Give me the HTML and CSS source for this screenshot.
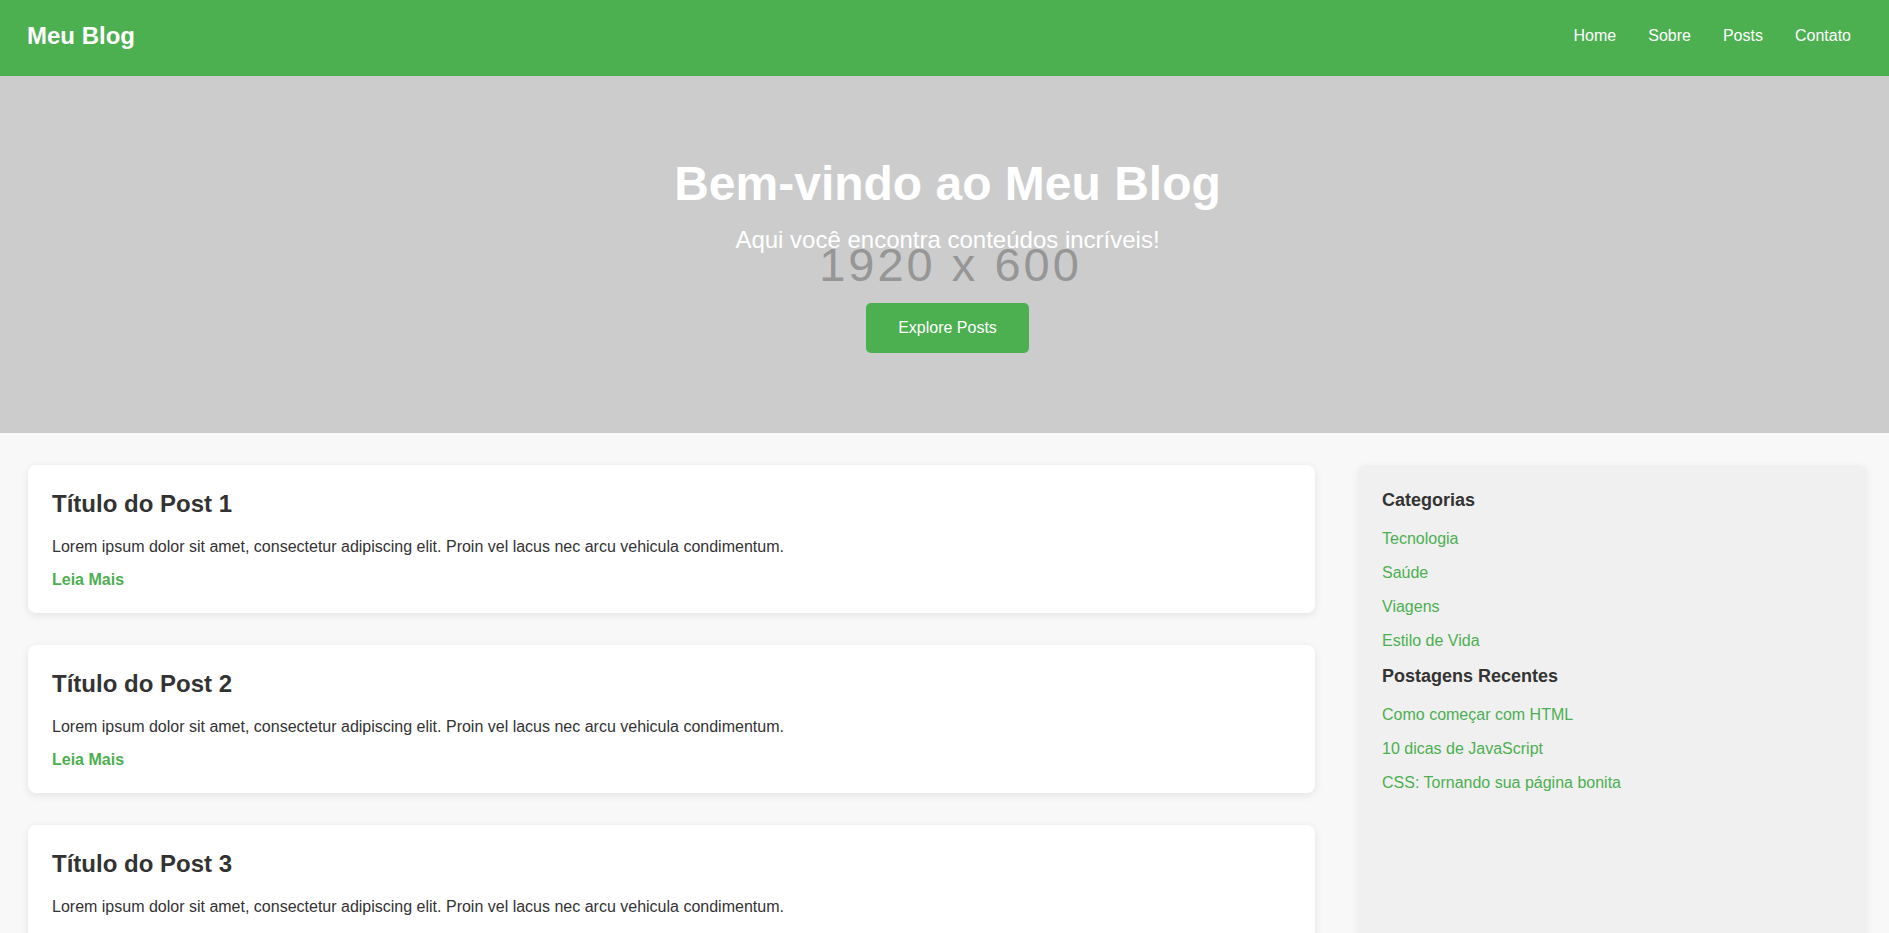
FILE: index.html
```
<!DOCTYPE html>
<html lang="pt-BR">
<head>
<meta charset="utf-8">
<title>Meu Blog</title>
<link rel="stylesheet" href="styles.css">
</head>
<body>
<header class="site-header">
  <div class="logo">Meu Blog</div>
  <nav class="nav">
    <a href="#">Home</a>
    <a href="#">Sobre</a>
    <a href="#">Posts</a>
    <a href="#">Contato</a>
  </nav>
</header>
<section class="hero">
  <span class="hero-placeholder">1920 x 600</span>
  <div class="hero-content">
    <h1 class="hero-title">Bem-vindo ao Meu Blog</h1>
    <p class="hero-sub">Aqui você encontra conteúdos incríveis!</p>
    <a class="btn" href="#">Explore Posts</a>
  </div>
</section>
<main class="main">
  <div class="posts">
    <article class="card">
      <h2 class="card-title">Título do Post 1</h2>
      <p class="card-text">Lorem ipsum dolor sit amet, consectetur adipiscing elit. Proin vel lacus nec arcu vehicula condimentum.</p>
      <a class="read-more" href="#">Leia Mais</a>
    </article>
    <article class="card">
      <h2 class="card-title">Título do Post 2</h2>
      <p class="card-text">Lorem ipsum dolor sit amet, consectetur adipiscing elit. Proin vel lacus nec arcu vehicula condimentum.</p>
      <a class="read-more" href="#">Leia Mais</a>
    </article>
    <article class="card">
      <h2 class="card-title">Título do Post 3</h2>
      <p class="card-text">Lorem ipsum dolor sit amet, consectetur adipiscing elit. Proin vel lacus nec arcu vehicula condimentum.</p>
      <a class="read-more" href="#">Leia Mais</a>
    </article>
  </div>
  <aside class="sidebar">
    <h3 class="side-title">Categorias</h3>
    <ul class="side-list">
      <li><a href="#">Tecnologia</a></li>
      <li><a href="#">Saúde</a></li>
      <li><a href="#">Viagens</a></li>
      <li><a href="#">Estilo de Vida</a></li>
    </ul>
    <h3 class="side-title">Postagens Recentes</h3>
    <ul class="side-list">
      <li><a href="#">Como começar com HTML</a></li>
      <li><a href="#">10 dicas de JavaScript</a></li>
      <li><a href="#">CSS: Tornando sua página bonita</a></li>
    </ul>
  </aside>
</main>
</body>
</html>
```
FILE: styles.css
```
* { box-sizing: border-box; }
body {
  margin: 0;
  font-family: "Liberation Sans", Arial, sans-serif;
  background: #f8f8f8;
  color: #333;
}
a { text-decoration: none; }

.site-header {
  height: 76px;
  background: #4caf50;
  display: flex;
  align-items: center;
  justify-content: space-between;
  padding: 0 38px 5px 27px;
}
.logo {
  color: #fff;
  font-size: 24px;
  font-weight: bold;
}
.nav {
  display: flex;
  gap: 32px;
}
.nav a {
  color: #fff;
  font-size: 16px;
}

.hero {
  position: relative;
  height: 357px;
  background: #cccccc;
  display: flex;
  align-items: center;
  justify-content: center;
  padding-left: 6px;
  overflow: hidden;
}
.hero-placeholder {
  position: absolute;
  top: 165px;
  left: 12px;
  right: 0;
  text-align: center;
  font-size: 47px;
  line-height: 47px;
  letter-spacing: 3px;
  color: #969696;
}
.hero-content {
  position: relative;
  display: flex;
  flex-direction: column;
  align-items: center;
  color: #fff;
}
.hero-title {
  margin: 0 0 15px;
  font-size: 48px;
  font-weight: bold;
}
.hero-sub {
  margin: 0 0 49px;
  font-size: 24px;
}
.btn {
  display: inline-block;
  background: #4caf50;
  color: #fff;
  font-size: 16px;
  padding: 16px 32px;
  border-radius: 5px;
}

.main {
  display: grid;
  grid-template-columns: 1287px 509px;
  gap: 43px;
  padding: 32px 22px 0 28px;
}
.posts {
  display: flex;
  flex-direction: column;
  gap: 32px;
}
.card {
  background: #fff;
  border-radius: 8px;
  padding: 25px 24px 24px;
  box-shadow: 0 2px 8px rgba(0, 0, 0, 0.09);
}
.card-title {
  margin: 0 0 20px;
  font-size: 24px;
  color: #333;
}
.card-text {
  margin: 0 0 15px;
  font-size: 16px;
  color: #333;
}
.read-more {
  display: block;
  color: #4caf50;
  font-weight: bold;
  font-size: 16px;
}

.sidebar {
  background: #f0f0f0;
  border-radius: 8px;
  padding: 25px 24px 24px;
  box-shadow: 0 2px 8px rgba(0, 0, 0, 0.06);
}
.side-title {
  margin: 0 0 19px;
  font-size: 18px;
  color: #333;
}
.side-list {
  list-style: none;
  margin: 0;
  padding: 0;
}
.side-list li {
  margin-bottom: 16px;
  font-size: 16px;
}
.side-list a {
  color: #4caf50;
}
```
